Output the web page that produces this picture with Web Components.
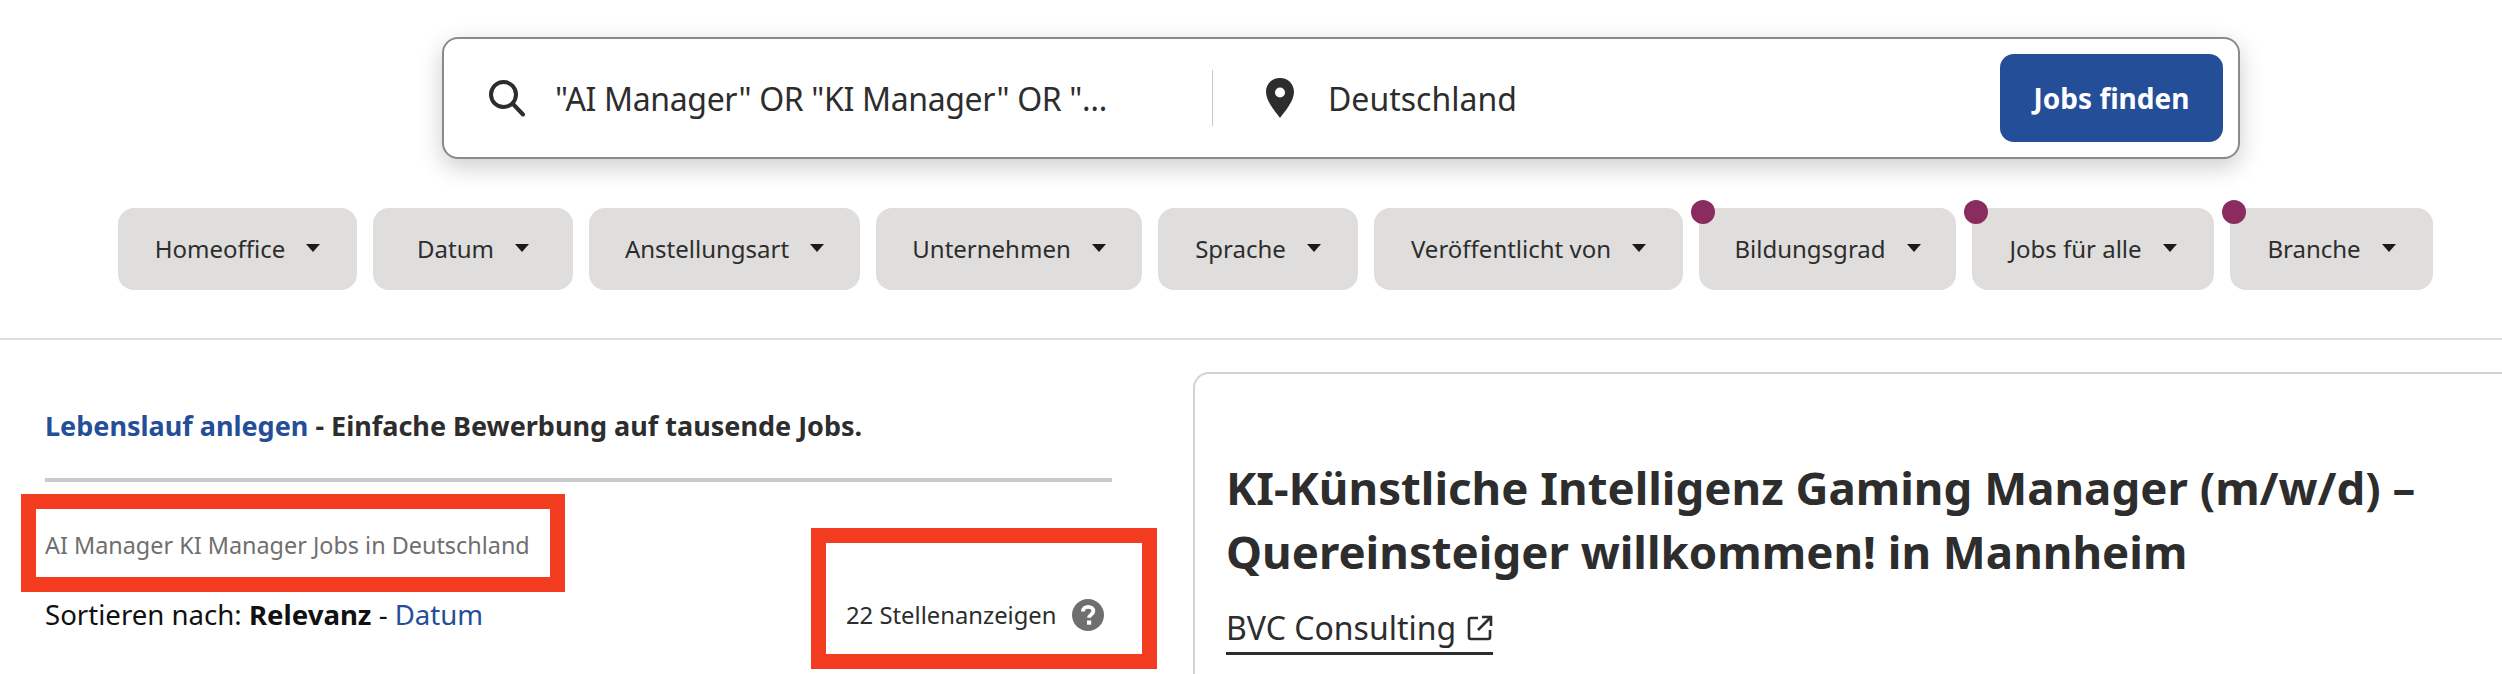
<!DOCTYPE html>
<html lang="de">
<head>
<meta charset="utf-8">
<title>AI Manager KI Manager Jobs in Deutschland</title>
<style>
  html, body { margin: 0; background: #fff; }
  body { width: 2502px; height: 674px; overflow: hidden; font-family: "Noto Sans", "Open Sans", sans-serif; color: #2d2d2d; }
</style>
</head>
<body>
<job-page></job-page>

<script>
class JobSearchBar extends HTMLElement {
  constructor() {
    super();
    this.attachShadow({ mode: "open" });
  }

  connectedCallback() {
    this.shadowRoot.innerHTML = `
      <style>
        :host{
          display: flex;
          align-items: center;
          box-sizing: border-box;
          width: 1798px;
          height: 122px;
          margin-left: 442px;
          padding: 0 15px 0 44px;
          background: #fff;
          border: 2px solid #8a8a8a;
          border-radius: 16px;
          box-shadow: 0 8px 24px rgba(0,0,0,.2);
          font-size: 32px;
        }
        .what{ display: flex; align-items: center; width: 724px; }
        .what svg{ width: 38px; height: 38px; margin-right: 29px; flex: none; }
        .what span{ letter-spacing: -.35px; }
        .sep{ width: 1px; height: 56px; background: #c9c9c9; flex: none; }
        .where{ display: flex; align-items: center; flex: 1; padding-left: 51px; }
        .where svg{ width: 32px; height: 42px; margin-right: 32px; flex: none; }
        button{
          width: 223px;
          height: 88px;
          border: 0;
          border-radius: 14px;
          background: #254e99;
          color: #fff;
          font: 700 28px "Noto Sans", sans-serif;
        }
      </style>
      <div class="what">
        <svg viewBox="0 0 38 38" fill="none" stroke="#2d2d2d" stroke-width="4" stroke-linecap="round">
          <circle cx="15.5" cy="15.5" r="12.5"/>
          <path d="M25 25l10 10.5"/>
        </svg>
        <span>"AI Manager" OR "KI Manager" OR "…</span>
      </div>
      <div class="sep"></div>
      <div class="where">
        <svg viewBox="0 0 32 42">
          <path fill="#2d2d2d" fill-rule="evenodd" d="M16 1C7.800 1 2 7.200 2 15c0 9.500 9.700 20 14 26 4.300-6 14-16.500 14-26C30 7.200 24.200 1 16 1zm0 9.500a5 5 0 1 1 0 10 5 5 0 0 1 0-10z"/>
        </svg>
        <span>Deutschland</span>
      </div>
      <button>Jobs finden</button>
    `;
  }
}

class FilterChip extends HTMLElement {
  constructor() {
    super();
    this.attachShadow({ mode: "open" });
  }

  connectedCallback() {
    const w = this.getAttribute("width");
    this.shadowRoot.innerHTML = `
      <style>
        :host{
          position: relative;
          display: flex;
          align-items: center;
          justify-content: center;
          box-sizing: border-box;
          width: ${w}px;
          height: 82px;
          padding-bottom: 2px;
          background: #dfdedd;
          border-radius: 16px;
          font-size: 24px;
        }
        i{
          width: 0;
          height: 0;
          margin-left: 21px;
          border: 7px solid transparent;
          border-top: 8px solid #1a1a1a;
          border-bottom: 0;
        }
        b{
          display: ${this.hasAttribute("marked") ? "block" : "none"};
          position: absolute;
          left: -8px;
          top: -8px;
          width: 24px;
          height: 24px;
          border-radius: 50%;
          background: #8a2c60;
        }
      </style>
      <b></b><slot></slot><i></i>
    `;
  }
}

class RedMark extends HTMLElement {
  constructor() {
    super();
    this.attachShadow({ mode: "open" });
    this.shadowRoot.innerHTML = `
      <style>
        :host{ display: block; box-sizing: border-box; outline: 15px solid #f23b1f; }
      </style>
      <slot></slot>
    `;
  }
}

class HelpIcon extends HTMLElement {
  constructor() {
    super();
    this.attachShadow({ mode: "open" });
    this.shadowRoot.innerHTML = `
      <style>
        :host{ display: inline-flex; }
        svg{ width: 32px; height: 32px; }
      </style>
      <svg viewBox="0 0 32 32">
        <circle cx="16" cy="16" r="16" fill="#6f6f6f"/>
        <path d="M11 12.500c0-3 2.300-4.700 5.200-4.700s5.100 1.600 5.100 4.200c0 3.600-4.200 3.600-4.200 6.800" fill="none" stroke="#fff" stroke-width="3.800"/>
        <rect x="15" y="21.500" width="4.200" height="4.200" fill="#fff"/>
      </svg>
    `;
  }
}

class ResultsColumn extends HTMLElement {
  constructor() {
    super();
    this.attachShadow({ mode: "open" });
    this.shadowRoot.innerHTML = `
      <style>
        :host{ display: block; padding: 0 0 0 45px; }
        a{ color: #254e99; text-decoration: none; }
        .banner{
          height: 142px;
          box-sizing: border-box;
          padding-top: 68px;
          border-bottom: 4px solid #cbcbcb;
          width: 1067px;
          font-size: 27px;
          line-height: 36px;
          font-weight: 700;
        }
        .rows{ display: flex; width: 1067px; justify-content: space-between; padding-top: 27px; }
        .query{
          display: flex;
          align-items: center;
          box-sizing: border-box;
          width: 514px;
          height: 68px;
          margin-left: -9px;
          padding: 3px 0 0 9px;
          color: #6f6f6f;
          font-size: 23.4px;
        }
        .sort{ margin-top: 19px; font-size: 27.6px; line-height: 36px; color: #111; }
        .count-wrap{ margin-top: 34px; margin-right: -30px; }
        .count{
          display: flex;
          align-items: center;
          box-sizing: border-box;
          width: 316px;
          height: 111px;
          padding: 33px 0 0 20px;
          font-size: 23.8px;
        }
        help-icon{ margin-left: 16px; }
      </style>
      <div class="banner"><a href="#">Lebenslauf anlegen</a> - Einfache Bewerbung auf tausende Jobs.</div>
      <div class="rows">
        <div>
          <red-mark class="query">AI Manager KI Manager Jobs in Deutschland</red-mark>
          <div class="sort">Sortieren nach: <b>Relevanz</b> - <a href="#">Datum</a></div>
        </div>
        <div class="count-wrap">
          <red-mark class="count">22 Stellenanzeigen<help-icon></help-icon></red-mark>
        </div>
      </div>
    `;
  }
}

class JobDetail extends HTMLElement {
  constructor() {
    super();
    this.attachShadow({ mode: "open" });
    this.shadowRoot.innerHTML = `
      <style>
        :host{
          display: block;
          box-sizing: border-box;
          height: 302px;
          margin-top: 32px;
          padding: 81px 0 0 31px;
          border: 2px solid #d4d2d0;
          border-right: 0;
          border-bottom: 0;
          border-radius: 16px 0 0 0;
          overflow: hidden;
        }
        h1{ margin: 0; font-size: 45.6px; line-height: 64px; font-weight: 700; }
        .company{
          display: inline-flex;
          align-items: center;
          margin-top: 23px;
          padding-bottom: 2px;
          border-bottom: 3px solid #2d2d2d;
          font-size: 32px;
          line-height: 44px;
        }
        svg{ width: 26px; height: 26px; margin-left: 11px; }
      </style>
      <h1>KI-Künstliche Intelligenz Gaming Manager (m/w/d) –<br>Quereinsteiger willkommen! in Mannheim</h1>
      <div class="company">BVC Consulting
        <svg viewBox="0 0 26 26" fill="none" stroke="#2d2d2d" stroke-width="2.600">
          <path d="M11 3H4a2 2 0 0 0-2 2v17a2 2 0 0 0 2 2h17a2 2 0 0 0 2-2v-7"/>
          <path d="M15 2h9v9M24 2L11 15"/>
        </svg>
      </div>
    `;
  }
}

class JobPage extends HTMLElement {
  constructor() {
    super();
    this.attachShadow({ mode: "open" });
    this.shadowRoot.innerHTML = `
      <style>
        :host{ display: block; }
        header{ padding-top: 37px; border-bottom: 2px solid #e0e0e0; height: 301px; }
        .chips{ display: flex; gap: 16px; margin: 49px 0 0 118px; }
        main{ display: grid; grid-template-columns: 1193px 1fr; height: 334px; overflow: hidden; }
      </style>
      <header>
        <job-search-bar></job-search-bar>
        <div class="chips">
          <filter-chip width="239">Homeoffice</filter-chip>
          <filter-chip width="200">Datum</filter-chip>
          <filter-chip width="271">Anstellungsart</filter-chip>
          <filter-chip width="266">Unternehmen</filter-chip>
          <filter-chip width="200">Sprache</filter-chip>
          <filter-chip width="309">Veröffentlicht von</filter-chip>
          <filter-chip width="257" marked>Bildungsgrad</filter-chip>
          <filter-chip width="242" marked>Jobs für alle</filter-chip>
          <filter-chip width="203" marked>Branche</filter-chip>
        </div>
      </header>
      <main>
        <results-column></results-column>
        <job-detail></job-detail>
      </main>
    `;
  }
}

customElements.define("job-search-bar", JobSearchBar);
customElements.define("filter-chip", FilterChip);
customElements.define("red-mark", RedMark);
customElements.define("help-icon", HelpIcon);
customElements.define("results-column", ResultsColumn);
customElements.define("job-detail", JobDetail);
customElements.define("job-page", JobPage);
</script>
</body>
</html>
